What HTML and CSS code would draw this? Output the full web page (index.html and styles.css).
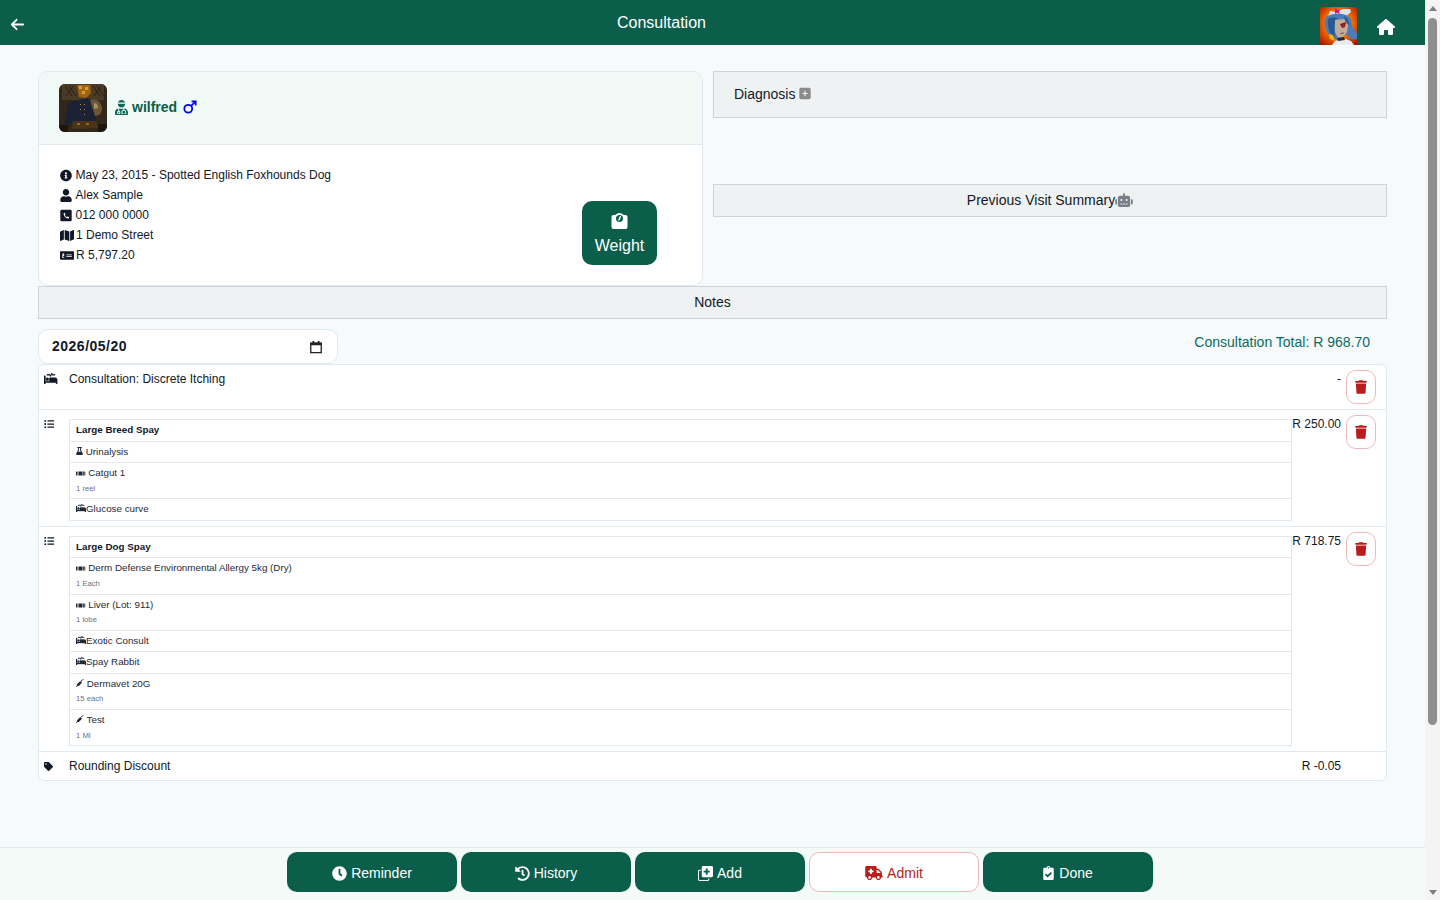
FILE: index.html
```html
<!DOCTYPE html>
<html lang="en">
<head>
<meta charset="utf-8">
<title>Consultation</title>
<link rel="stylesheet" href="styles.css">
</head>
<body>
<svg class="sprite" aria-hidden="true">
  <defs>
    <radialGradient id="fire" cx="50%" cy="45%" r="70%"><stop offset="0" stop-color="#ffb01a"/><stop offset=".55" stop-color="#f26a00"/><stop offset="1" stop-color="#a81500"/></radialGradient>
    <filter id="soft"><feGaussianBlur stdDeviation=".45"/></filter>
    <symbol id="i-arrow" viewBox="0 0 448 512"><path d="M9.4 233.4c-12.5 12.5-12.5 32.8 0 45.3l160 160c12.5 12.5 32.8 12.5 45.3 0s12.5-32.8 0-45.3L109.2 288H416c17.7 0 32-14.3 32-32s-14.3-32-32-32H109.3L214.600 118.600c12.500-12.500 12.500-32.800 0-45.300s-32.800-12.500-45.300 0l-160 160z"/></symbol>
    <symbol id="i-home" viewBox="0 0 576 512"><path d="M575.800 255.500c0 18-15 32.100-32 32.100h-32l.7 160.200c0 2.700-.2 5.400-.5 8.100V472c0 22.100-17.900 40-40 40H456c-1.100 0-2.200 0-3.300-.1-1.400.1-2.800.1-4.200.1H392c-22.100 0-40-17.900-40-40v-88c0-17.700-14.300-32-32-32h-64c-17.700 0-32 14.300-32 32v88c0 22.100-17.900 40-40 40h-55.900c-1.500 0-3-.1-4.500-.2-1.200.1-2.400.2-3.600.2H104c-22.100 0-40-17.900-40-40V360c0-.9 0-1.900.1-2.800v-69.600H32c-18 0-32-14-32-32.100 0-9 3-17 10-24L266.400 8c7-7 15-8 22-8s15 2 21 7l255.400 224.500c8 7 12 15 11 24z"/></symbol>
    <symbol id="i-info" viewBox="0 0 512 512"><path d="M256 8C119.043 8 8 119.083 8 256c0 136.997 111.043 248 248 248s248-111.003 248-248C504 119.083 392.957 8 256 8zm0 110c23.196 0 42 18.804 42 42s-18.804 42-42 42-42-18.804-42-42 18.804-42 42-42zm56 254c0 6.627-5.373 12-12 12h-88c-6.627 0-12-5.373-12-12v-24c0-6.627 5.373-12 12-12h12v-64h-12c-6.627 0-12-5.373-12-12v-24c0-6.627 5.373-12 12-12h64c6.627 0 12 5.373 12 12v100h12c6.627 0 12 5.373 12 12v24z"/></symbol>
    <symbol id="i-user" viewBox="0 0 448 512"><path d="M224 256c70.7 0 128-57.3 128-128S294.7 0 224 0 96 57.3 96 128s57.3 128 128 128zm89.6 32h-16.7c-22.2 10.2-46.9 16-72.9 16s-50.6-5.8-72.9-16h-16.7C60.2 288 0 348.2 0 422.4V464c0 26.5 21.5 48 48 48h352c26.5 0 48-21.5 48-48v-41.6c0-74.2-60.2-134.4-134.4-134.4z"/></symbol>
    <symbol id="i-phone" viewBox="0 0 448 512"><path fill-rule="evenodd" d="M48 32h352a48 48 0 0 1 48 48v352a48 48 0 0 1-48 48H48a48 48 0 0 1-48-48V80a48 48 0 0 1 48-48zM166 150l-32 24c-8 6-10 12-8 24 14 90 88 164 176 178 12 2 18 0 24-8l24-32c4-6 3-12-3-15l-56-26c-6-3-10-1-14 4l-20 25c-36-18-66-48-84-84l25-20c5-4 7-8 4-14l-26-56c-3-6-4-4-10 0z"/></symbol>
    <symbol id="i-map" viewBox="0 0 576 512"><path d="M0 117.66v346.32c0 11.32 11.43 19.06 21.94 14.86L160 416V32L20.12 87.95A32.006 32.006 0 0 0 0 117.66zM192 416l192 64V96L192 32v384zM554.06 33.16L416 96v384l139.88-55.95A31.996 31.996 0 0 0 576 394.34V48.02c0-11.32-11.43-19.06-21.94-14.86z"/></symbol>
    <symbol id="i-money" viewBox="0 0 640 512"><path fill-rule="evenodd" d="M32 64h576a32 32 0 0 1 32 32v320a32 32 0 0 1-32 32H32a32 32 0 0 1-32-32V96a32 32 0 0 1 32-32zM96 176v32h56v32h-56v112h32v24h32v-24h32v-32h-64v-32h64V176h-32v-24h-32v24zM288 208v40h256v-40zM288 288v40h256v-40z"/></symbol>
    <symbol id="i-plus" viewBox="0 0 448 512"><path d="M64 32C28.700 32 0 60.700 0 96v320c0 35.300 28.700 64 64 64h320c35.300 0 64-28.700 64-64V96c0-35.300-28.700-64-64-64H64zm136 312v-64h-64c-13.300 0-24-10.700-24-24s10.700-24 24-24h64v-64c0-13.300 10.700-24 24-24s24 10.700 24 24v64h64c13.300 0 24 10.700 24 24s-10.700 24-24 24h-64v64c0 13.300-10.700 24-24 24s-24-10.700-24-24z"/></symbol>
    <symbol id="i-robot" viewBox="0 0 640 512"><path d="M32 224H64V416H32A32 32 0 0 1 0 384V256A32 32 0 0 1 32 224Zm512-48V448a64 64 0 0 1-64 64H160a64 64 0 0 1-64-64V176a80 80 0 0 1 80-80H288V32a32 32 0 0 1 64 0V96H464A80 80 0 0 1 544 176ZM264 256a40 40 0 1 0-40 40A40 40 0 0 0 264 256Zm-8 128H192v32h64Zm96 0H288v32h64ZM456 256a40 40 0 1 0-40 40A40 40 0 0 0 456 256Zm-8 128H384v32h64ZM640 256V384a32 32 0 0 1-32 32H576V224h32A32 32 0 0 1 640 256Z"/></symbol>
    <symbol id="i-weight" viewBox="0 0 512 512"><path d="M64 64H448a64 64 0 0 1 64 64V448a64 64 0 0 1-64 64H64a64 64 0 0 1-64-64V128a64 64 0 0 1 64-64Z"/><circle cx="256" cy="168" r="168"/><circle cx="256" cy="176" r="112" fill="#0b5e4a"/><path d="M236 226L284 116" stroke="#fff" stroke-width="46" stroke-linecap="round"/></symbol>
    <symbol id="i-nurse" viewBox="0 0 448 512"><path d="M224 256c70.7 0 128-57.3 128-128S294.7 0 224 0 96 57.3 96 128s57.3 128 128 128zM104 424c0 13.3 10.7 24 24 24s24-10.7 24-24-10.7-24-24-24-24 10.7-24 24zm216-135.4v49c36.5 7.4 64 39.8 64 78.4v41.7c0 7.6-5.4 14.2-12.9 15.7l-32.2 6.4c-4.3.9-8.5-1.9-9.4-6.3l-3.1-15.7c-.9-4.3 1.9-8.6 6.3-9.4l19.3-3.9V416c0-62.8-96-65.1-96 1.9v26.7l19.3 3.9c4.3.9 7.1 5.1 6.3 9.4l-3.1 15.7c-.9 4.3-5.1 7.1-9.4 6.3l-31.2-4.2c-7.9-1.1-13.8-7.8-13.8-15.9V416c0-38.6 27.5-70.9 64-78.4v-45.2c-2.2.7-4.4 1.1-6.6 1.9-18 6.3-37.3 9.8-57.4 9.8s-39.4-3.500-57.4-9.8c-7.4-2.6-14.9-4.2-22.6-5.2v81.6c23.1 6.9 40 28.1 40 53.4 0 30.9-25.1 56-56 56s-56-25.1-56-56c0-25.3 16.9-46.5 40-53.4v-80.4C48.5 301 0 355.8 0 422.4v44.8C0 491.9 20.1 512 44.8 512h358.4c24.7 0 44.8-20.1 44.8-44.8v-44.8c0-72-56.8-130.3-128-133.8z"/><rect x="84" y="84" width="280" height="44" fill="#f0f9f6"/></symbol>
    <symbol id="i-mars" viewBox="0 0 16 16"><circle cx="6" cy="10" r="4.500" fill="none" stroke="currentColor" stroke-width="2"/><path d="M9.300 6.700L14 2M9.800 1.500h4.700v4.700" fill="none" stroke="currentColor" stroke-width="2"/></symbol>
    <symbol id="i-bed" viewBox="0 0 640 512"><path stroke="currentColor" stroke-width="24" d="M528 224H272c-8.800 0-16 7.200-16 16v144H64V144c0-8.800-7.200-16-16-16H16c-8.800 0-16 7.200-16 16v352c0 8.800 7.200 16 16 16h32c8.800 0 16-7.200 16-16v-48h512v48c0 8.800 7.200 16 16 16h32c8.800 0 16-7.200 16-16V336c0-61.900-50.100-112-112-112zM136 96h126.100l27.600 55.200c5.900 11.800 22.700 11.800 28.600 0L368 51.800 390.100 96H512c8.800 0 16-7.200 16-16s-7.200-16-16-16H409.900L382.300 8.800C376.400-3 359.600-3 353.700 8.800L304 108.200l-19.900-39.800c-1.400-2.700-4.100-4.400-7.200-4.400H136c-4.400 0-8 3.600-8 8v16c0 4.400 3.600 8 8 8zm24 256c35.300 0 64-28.700 64-64s-28.700-64-64-64-64 28.700-64 64 28.700 64 64 64z"/></symbol>
    <symbol id="i-list" viewBox="0 0 512 512"><path d="M48 48a48 48 0 1 0 48 48 48 48 0 0 0-48-48zm0 160a48 48 0 1 0 48 48 48 48 0 0 0-48-48zm0 160a48 48 0 1 0 48 48 48 48 0 0 0-48-48zm448 16H176a16 16 0 0 0-16 16v32a16 16 0 0 0 16 16h320a16 16 0 0 0 16-16v-32a16 16 0 0 0-16-16zm0-320H176a16 16 0 0 0-16 16v32a16 16 0 0 0 16 16h320a16 16 0 0 0 16-16V80a16 16 0 0 0-16-16zm0 160H176a16 16 0 0 0-16 16v32a16 16 0 0 0 16 16h320a16 16 0 0 0 16-16v-32a16 16 0 0 0-16-16z"/></symbol>
    <symbol id="i-tag" viewBox="0 0 512 512"><path d="M0 252.118V48C0 21.490 21.490 0 48 0h204.118a48 48 0 0 1 33.941 14.059l211.882 211.882c18.745 18.745 18.745 49.137 0 67.882L293.823 497.941c-18.745 18.745-49.137 18.745-67.882 0L14.059 286.059A48 48 0 0 1 0 252.118zM112 64c-26.510 0-48 21.490-48 48s21.490 48 48 48 48-21.490 48-48-21.490-48-48-48z"/></symbol>
    <symbol id="i-trash" viewBox="0 0 448 512"><path d="M135.200 17.700L128 32H32C14.300 32 0 46.300 0 64s14.300 32 32 32h384c17.700 0 32-14.300 32-32s-14.300-32-32-32h-96l-7.200-14.300C307.400 6.800 296.300 0 284.200 0H163.800c-12.100 0-23.200 6.800-28.600 17.700zM416 128H32l21.200 339c1.600 25.300 22.600 45 47.900 45h245.800c25.300 0 46.300-19.700 47.900-45L416 128z"/></symbol>
    <symbol id="i-flask" viewBox="0 0 448 512"><path d="M96 0h256a16 16 0 0 1 16 16v32a16 16 0 0 1-16 16h-24v136l112 232c14 30-8 80-48 80H56c-40 0-62-50-48-80L120 200V64H96a16 16 0 0 1-16-16V16A16 16 0 0 1 96 0zm88 64v152l-40 84h160l-40-84V64z"/></symbol>
    <symbol id="i-pills" viewBox="0 128 640 256"><path d="M40 128h40v256H40A40 40 0 0 1 0 344V168a40 40 0 0 1 40-40zm72 0h56v256h-56zm88 0h240v256H200zm272 0h56v256h-56zm88 0h40a40 40 0 0 1 40 40v176a40 40 0 0 1-40 40h-40z"/></symbol>
    <symbol id="i-syringe" viewBox="0 0 512 512"><path d="M496 16c-20-20-52-20-72 0l-60 60-12-12-44 44 48 48 44-44-12-12 60-60c20-20 28-4 48-24zM272 124L84 312c-14 14-22 32-22 52v46L8 464c-10 10-10 26 0 36s26 10 36 0l54-54h46c20 0 38-8 52-22l188-188z"/></symbol>
    <symbol id="i-calendar" viewBox="0 0 16 16"><path d="M2 3.500h12v11H2z" fill="none" stroke="currentColor" stroke-width="1.500"/><path d="M4 1h2v3H4zM10 1h2v3h-2z"/><path d="M2 3h12v3H2z"/></symbol>
    <symbol id="i-clock" viewBox="0 0 512 512"><path d="M256 8C119 8 8 119 8 256s111 248 248 248 248-111 248-248S393 8 256 8zm92.490 313l-20 25a16 16 0 0 1-22.490 2.500l-67-49.720a40 40 0 0 1-15-31.230V112a16 16 0 0 1 16-16h32a16 16 0 0 1 16 16v144l58 42.500a16 16 0 0 1 2.490 22.500z"/></symbol>
    <symbol id="i-history" viewBox="0 0 512 512"><path d="M504 255.531c.253 136.640-111.180 248.372-247.820 248.468-59.015.042-113.223-20.530-155.822-54.911-11.077-8.940-11.905-25.541-1.839-35.607l11.267-11.267c8.609-8.609 22.353-9.551 31.891-1.984C173.062 425.135 212.781 440 256 440c101.705 0 184-82.311 184-184 0-101.705-82.311-184-184-184-48.814 0-93.149 18.969-126.068 49.932l50.754 50.754c10.080 10.080 2.941 27.314-11.313 27.314H24c-8.837 0-16-7.163-16-16V38.627c0-14.254 17.234-21.393 27.314-11.314l49.372 49.372C129.209 34.136 189.552 8 256 8c136.810 0 247.747 110.780 248 247.531zm-180.912 78.784l9.823-12.630c8.138-10.463 6.253-25.542-4.210-33.679L288 256.349V152c0-13.255-10.745-24-24-24h-16c-13.255 0-24 10.745-24 24v135.651l65.409 50.874c10.463 8.137 25.541 6.253 33.679-4.210z"/></symbol>
    <symbol id="i-copy" viewBox="0 0 512 512"><path fill-rule="evenodd" d="M176 0h288a48 48 0 0 1 48 48v288a48 48 0 0 1-48 48H176a48 48 0 0 1-48-48V48a48 48 0 0 1 48-48zm88 88v72h-72v64h72v72h64v-72h72v-64h-72V88z"/><path d="M48 128h48v32H48a16 16 0 0 0-16 16v288a16 16 0 0 0 16 16h288a16 16 0 0 0 16-16v-48h32v48a48 48 0 0 1-48 48H48a48 48 0 0 1-48-48V176a48 48 0 0 1 48-48z"/></symbol>
    <symbol id="i-ambulance" viewBox="0 0 640 512"><path d="M624 352h-16V243.900c0-12.700-5.100-24.900-14.100-33.900L494 110.100c-9-9-21.200-14.100-33.900-14.100H416V48c0-26.500-21.500-48-48-48H48C21.500 0 0 21.500 0 48v320c0 26.500 21.500 48 48 48h16c0 53 43 96 96 96s96-43 96-96h128c0 53 43 96 96 96s96-43 96-96h48c8.800 0 16-7.200 16-16v-32c0-8.800-7.200-16-16-16zM160 464c-26.500 0-48-21.500-48-48s21.500-48 48-48 48 21.500 48 48-21.500 48-48 48zm144-248c0 4.400-3.600 8-8 8h-56v56c0 4.400-3.600 8-8 8h-48c-4.400 0-8-3.600-8-8v-56h-56c-4.400 0-8-3.600-8-8v-48c0-4.400 3.600-8 8-8h56v-56c0-4.400 3.600-8 8-8h48c4.400 0 8 3.600 8 8v56h56c4.400 0 8 3.600 8 8v48zm176 248c-26.500 0-48-21.500-48-48s21.500-48 48-48 48 21.500 48 48-21.500 48-48 48zm80-208H416V144h44.100l99.900 99.900V256z"/></symbol>
    <symbol id="i-clipboard" viewBox="0 0 384 512"><path d="M336 64h-80c0-35.300-28.700-64-64-64s-64 28.700-64 64H48C21.500 64 0 85.500 0 112v352c0 26.500 21.500 48 48 48h288c26.500 0 48-21.500 48-48V112c0-26.500-21.500-48-48-48zM192 40c13.300 0 24 10.700 24 24s-10.700 24-24 24-24-10.700-24-24 10.700-24 24-24zm121.200 231.800l-143 141.800c-4.700 4.700-12.300 4.600-17-.1l-82.600-83.300c-4.700-4.700-4.600-12.300.1-17L99.100 285c4.700-4.700 12.300-4.600 17 .1l46 46.400 106-105.200c4.700-4.700 12.300-4.600 17 .1l28.200 28.400c4.700 4.800 4.600 12.300-.1 17z"/></symbol>
  </defs>
</svg>

<div class="app">
  <header class="topbar">
    <svg class="ic-back"><use href="#i-arrow"/></svg>
    <h1 class="title">Consultation</h1>
    <div class="top-right">
      <svg class="top-avatar" viewBox="0 0 37 38" role="img" aria-label="User avatar">
        <rect width="37" height="38" fill="url(#fire)"/>
        <path d="M8 9l2-5 6 1 7-3 7 0 1 3-5 4-10 2z" fill="#dfe4ea"/>
        <path d="M15 1l3 2 2-1-1 3 1 2-3-1-2 1 0-3z" fill="#d5178f"/>
        <path d="M6 10c5-4 15-4 20-2 5 2 6 7 6 11 2 3 3 5 5 7v6c-3 1-6 0-8-2l-3-3-9 6-6-3C5 25 3 15 6 10z" fill="#4a7db8"/>
        <path d="M8 12c3-2 6-2 9-1l-3 9 1 10-4-2c-2-5-4-11-3-16zM24 9c3 1 5 5 5 9l-3-2z" fill="#2c5790"/>
        <path d="M15 13l9-1 4 6-1 7-4 5-5 1-3-6z" fill="#c2ab98"/>
        <path d="M20 17l6-2-1 5-3 1z" fill="#6d2325"/>
        <path d="M22.500 17.500h2v2h-2z" fill="#e5141f"/>
        <path d="M19 27l5-2-1 2z" fill="#7a5a54"/>
        <path d="M9 27l4 1 2 6-5-2z" fill="#f1b21c"/>
        <path d="M15 34l8-3 8 3 3 4H12z" fill="#e8ecef"/>
        <path d="M17 31l7-1 1 3-7 1z" fill="#2c2730"/>
      </svg>
      <svg class="ic-home"><use href="#i-home"/></svg>
    </div>
  </header>

  <main class="content">
    <section class="top-grid">
      <article class="patient-card">
        <div class="patient-head">
          <svg class="pet-photo" viewBox="0 0 48 48" role="img" aria-label="Pet photo">
            <rect width="48" height="48" fill="#33261a"/>
            <g filter="url(#soft)">
              <path d="M3 0h42v16H3z" fill="#4a3a26"/>
              <path d="M6 2l7 10M10 2l7 10M14 2l-7 10M34 2l7 10M38 2l7 10M42 2l-7 10" stroke="#2a2014" stroke-width="1"/>
              <path d="M18 1h13l1 8-5 5-7-1z" fill="#9d6618"/>
              <path d="M20 2h3v3h-3zM26 3h3v3h-3zM23 7h3v3h-3z" fill="#dc9c2c"/>
              <path d="M10 18l19-4 7 4 1 21H14l-9 3 3-17z" fill="#1c2436"/>
              <path d="M31 16c6-2 11 1 12 8 0 5-3 8-7 8z" fill="#6c5535"/>
              <path d="M35 19c3 0 4 3 4 5l-4 1z" fill="#a78e63"/>
              <path d="M14 37h23l2 7-26 1z" fill="#4b3518"/>
              <path d="M18 39h3v2h-3zM27 39h3v2h-3z" fill="#8f6a2a"/>
              <path d="M0 41h10l-2 7H0zM39 40h9v8h-9z" fill="#1f160b"/>
            </g>
            <path d="M25 20h1v1h-1zM25 25h1v1h-1zM25 30h1v1h-1zM21 20h1v1h-1zM21 25h1v1h-1z" fill="#b58a3a"/>
          </svg>
          <svg class="ic-nurse"><use href="#i-nurse"/></svg>
          <span class="pet-name">wilfred</span>
          <svg class="ic-mars"><use href="#i-mars"/></svg>
        </div>
        <div class="patient-body">
          <ul class="info-list">
            <li><svg class="ic-info"><use href="#i-info"/></svg><span class="gap3">May 23, 2015 - Spotted English Foxhounds Dog</span></li>
            <li><svg class="ic-info"><use href="#i-user"/></svg><span class="gap3">Alex Sample</span></li>
            <li><svg class="ic-info"><use href="#i-phone"/></svg><span class="gap3">012 000 0000</span></li>
            <li><svg class="ic-map"><use href="#i-map"/></svg><span>1 Demo Street</span></li>
            <li><svg class="ic-map"><use href="#i-money"/></svg><span>R 5,797.20</span></li>
          </ul>
          <button class="weight-btn" type="button">
            <svg class="ic-weight"><use href="#i-weight"/></svg>
            <span>Weight</span>
          </button>
        </div>
      </article>
      <div class="side-col">
        <div class="bar diagnosis">Diagnosis <svg class="ic-plus"><use href="#i-plus"/></svg></div>
        <div class="bar summary">Previous Visit Summary<svg class="ic-robot"><use href="#i-robot"/></svg></div>
      </div>
    </section>

    <div class="bar notes">Notes</div>

    <div class="date-row">
      <div class="date-box"><span>2026/05/20</span><svg class="ic-cal"><use href="#i-calendar"/></svg></div>
      <div class="total">Consultation Total: R 968.70</div>
    </div>

    <section class="lines">
      <div class="line">
        <svg class="ic-row-bed"><use href="#i-bed"/></svg>
        <div class="line-main">Consultation: Discrete Itching</div>
        <div class="price">-</div>
        <button class="del" type="button" aria-label="Delete"><svg class="ic-trash"><use href="#i-trash"/></svg></button>
      </div>

      <div class="line">
        <svg class="ic-row-list"><use href="#i-list"/></svg>
        <div class="line-main">
          <ul class="bundle">
            <li class="bundle-title">Large Breed Spay</li>
            <li><svg class="ic-flask"><use href="#i-flask"/></svg> Urinalysis</li>
            <li><svg class="ic-pills"><use href="#i-pills"/></svg> Catgut 1<small>1 reel</small></li>
            <li><svg class="ic-bed"><use href="#i-bed"/></svg>Glucose curve</li>
          </ul>
        </div>
        <div class="price">R 250.00</div>
        <button class="del" type="button" aria-label="Delete"><svg class="ic-trash"><use href="#i-trash"/></svg></button>
      </div>

      <div class="line">
        <svg class="ic-row-list"><use href="#i-list"/></svg>
        <div class="line-main">
          <ul class="bundle">
            <li class="bundle-title">Large Dog Spay</li>
            <li><svg class="ic-pills"><use href="#i-pills"/></svg> Derm Defense Environmental Allergy 5kg (Dry)<small>1 Each</small></li>
            <li><svg class="ic-pills"><use href="#i-pills"/></svg> Liver (Lot: 911)<small>1 lobe</small></li>
            <li><svg class="ic-bed"><use href="#i-bed"/></svg>Exotic Consult</li>
            <li><svg class="ic-bed"><use href="#i-bed"/></svg>Spay Rabbit</li>
            <li><svg class="ic-syringe"><use href="#i-syringe"/></svg> Dermavet 20G<small>15 each</small></li>
            <li><svg class="ic-syringe"><use href="#i-syringe"/></svg> Test<small>1 Ml</small></li>
          </ul>
        </div>
        <div class="price">R 718.75</div>
        <button class="del" type="button" aria-label="Delete"><svg class="ic-trash"><use href="#i-trash"/></svg></button>
      </div>

      <div class="line">
        <svg class="ic-row-tag"><use href="#i-tag"/></svg>
        <div class="line-main">Rounding Discount</div>
        <div class="price">R -0.05</div>
        <div class="del-spacer"></div>
      </div>
    </section>
  </main>

  <footer class="actions">
    <button class="act" type="button"><svg class="ic-act"><use href="#i-clock"/></svg>Reminder</button>
    <button class="act" type="button"><svg class="ic-act"><use href="#i-history"/></svg>History</button>
    <button class="act" type="button"><svg class="ic-act"><use href="#i-copy"/></svg>Add</button>
    <button class="act act-danger" type="button"><svg class="ic-amb"><use href="#i-ambulance"/></svg>Admit</button>
    <button class="act" type="button"><svg class="ic-clip"><use href="#i-clipboard"/></svg>Done</button>
  </footer>
</div>

<div class="scrollbar" aria-hidden="true">
  <span class="sb-up"></span>
  <span class="sb-thumb"></span>
  <span class="sb-down"></span>
</div>
</body>
</html>
```
FILE: styles.css
```css
* { box-sizing: border-box; }
html, body { margin: 0; height: 100%; }
body {
  overflow: hidden;
  background: #f6fafb;
  color: #111827;
  font-family: "Liberation Sans", Arial, sans-serif;
  font-size: 12px;
}
svg { fill: currentColor; display: inline-block; flex: none; }
.sprite { position: absolute; width: 0; height: 0; }
ul { list-style: none; margin: 0; padding: 0; }
button { font-family: inherit; border: 0; cursor: pointer; padding: 0; }

.app { display: flex; flex-direction: column; height: 900px; }

.topbar {
  display: flex;
  align-items: flex-end;
  height: 45px;
  flex: none;
  padding: 0 45px 0 10px;
  background: #0b5e4a;
  color: #fff;
}
.ic-back { width: 15px; height: 15px; margin-bottom: 13px; }
.title {
  flex: 1;
  margin: 0 0 13px;
  font-size: 16px;
  font-weight: 400;
  line-height: 18px;
  text-align: center;
}
.top-right { display: flex; align-items: flex-end; padding-left: 22px; }
.top-avatar { width: 37px; height: 38px; display: block; }
.ic-home { width: 18px; height: 16px; margin: 0 0 10px 20px; }

.content {
  flex: 1;
  min-height: 0;
  padding: 26px 53px 0 38px;
}
.top-grid { display: grid; grid-template-columns: 665px 1fr; column-gap: 10px; }

.patient-card {
  height: 215px;
  background: #fff;
  border: 1px solid #e2e8f0;
  border-radius: 10px;
  overflow: hidden;
}
.patient-head {
  display: flex;
  align-items: center;
  height: 73px;
  padding: 0 20px;
  background: #f0f9f6;
  border-bottom: 1px solid #e2e8f0;
}
.pet-photo { width: 48px; height: 48px; border-radius: 6px; margin-right: 8px; }
.ic-nurse { width: 13px; height: 15px; color: #0b6a5a; margin: 0 4px 1px 0; }
.pet-name { margin-bottom: 2px; font-size: 14px; font-weight: 700; color: #0b5e4a; }
.ic-mars { width: 14px; height: 14px; margin: 0 0 2px 6px; color: #0000ff; }

.patient-body {
  display: flex;
  justify-content: space-between;
  align-items: flex-end;
  padding: 20px 45px 19px 21px;
}
.info-list li { display: flex; align-items: center; height: 20px; line-height: 20px; }
.ic-info { width: 12px; height: 13px; }
.ic-map { width: 14px; height: 13px; margin-right: 2px; }
.gap3 { margin-left: 3.5px; }
.weight-btn {
  display: flex;
  flex-direction: column;
  align-items: center;
  width: 75px;
  height: 64px;
  padding-top: 12px;
  border-radius: 10px;
  background: #0b5e4a;
  color: #fff;
  font-size: 16px;
  line-height: 18px;
}
.ic-weight { width: 17px; height: 16px; margin-bottom: 8px; }

.side-col { display: flex; flex-direction: column; }
.bar {
  background: #eff2f3;
  border: 1px solid #ced4da;
  font-size: 14px;
  color: #111827;
}
.diagnosis { display: flex; align-items: center; height: 47px; padding: 0 0 2px 20px; white-space: pre; }
.ic-plus { width: 12px; height: 13px; color: #8a8a8a; }
.summary {
  display: flex;
  align-items: center;
  justify-content: center;
  height: 33px;
  margin-top: 66px;
  padding-bottom: 2px;
}
.ic-robot { width: 18px; height: 14px; color: #7a7f87; }
.notes { height: 33px; line-height: 31px; text-align: center; }

.date-row {
  display: flex;
  justify-content: space-between;
  align-items: flex-start;
  margin-top: 10px;
  padding-right: 17px;
}
.date-box {
  display: flex;
  align-items: center;
  justify-content: space-between;
  width: 300px;
  height: 35px;
  padding: 0 14px 2px 13px;
  background: #fff;
  border: 1px solid #e2e8f0;
  border-radius: 10px;
  font-size: 14px;
  font-weight: 700;
  letter-spacing: .5px;
}
.ic-cal { width: 14px; height: 14px; margin-top: 2px; color: #222; }
.total { margin-top: 5px; font-size: 14px; line-height: 16px; color: #0c6b5f; }

.lines {
  background: #fff;
  border: 1px solid #e2e8f0;
  border-radius: 6px;
}
.line {
  display: flex;
  align-items: flex-start;
  padding: 5px 10px 5px 5px;
  line-height: 18px;
  border-top: 1px solid #e2e8f0;
}
.line:first-child { border-top: 0; }
.line-main { flex: 1; min-width: 0; padding-left: 11.5px; }
.ic-row-bed { width: 13.5px; height: 11px; margin-top: 3px; }
.ic-row-list { width: 10.5px; height: 10px; margin: 4px 3px 0 0; }
.ic-row-tag { width: 9px; height: 9px; margin: 5px 4.5px 0 0; }
.price { padding-right: 5px; white-space: nowrap; }
.del {
  display: flex;
  align-items: center;
  justify-content: center;
  width: 30px;
  height: 34px;
  background: #fff;
  border: 1px solid #efb8b8;
  border-radius: 10px;
}
.del-spacer { width: 30px; }
.ic-trash { width: 12px; height: 14px; color: #b91c1c; }

.bundle {
  margin-top: 4px;
  border: 1px solid #e2e8f0;
  border-bottom: 0;
  font-size: 9.8px;
  line-height: 14.55px;
}
.bundle li {
  padding: 3px 6px;
  border-bottom: 1px solid #e2e8f0;
  color: #1f2937;
}
.bundle .bundle-title { font-weight: 700; color: #111827; }
.bundle small { display: block; padding-top: 1px; font-size: 7.68px; line-height: 13.65px; color: #6b7280; }
.ic-flask { width: 7px; height: 8px; }
.ic-pills { width: 9.5px; height: 5px; }
.ic-bed { width: 10px; height: 8px; }
.ic-syringe { width: 8px; height: 8px; }

.actions {
  display: flex;
  justify-content: center;
  gap: 4px;
  height: 53px;
  flex: none;
  padding-top: 4px;
  background: #f3faf8;
  border-top: 1px solid #dde9e5;
}
.act {
  display: flex;
  align-items: center;
  justify-content: center;
  width: 170px;
  height: 40px;
  padding-top: 2px;
  background: #0b5e4a;
  color: #fff;
  font-size: 14px;
  border-radius: 10px;
}
.act-danger { background: #fff; color: #b91c1c; border: 1px solid #efb8b8; }
.ic-act { width: 15px; height: 15px; margin-right: 4px; }
.ic-amb { width: 18px; height: 14px; margin-right: 4px; }
.ic-clip { width: 11px; height: 14px; margin-right: 5px; }

.scrollbar {
  position: fixed;
  top: 0;
  right: 0;
  bottom: 0;
  width: 15px;
  background: #f4f4f4;
  display: flex;
  flex-direction: column;
  align-items: center;
}
.sb-up, .sb-down { width: 0; height: 0; border-left: 4px solid transparent; border-right: 4px solid transparent; }
.sb-up { margin-top: 6px; border-bottom: 5px solid #7f7f7f; }
.sb-thumb { width: 9px; height: 707px; margin-top: 7px; background: #8f8f8f; border-radius: 5px; }
.sb-down { margin-top: auto; margin-bottom: 5px; border-top: 5px solid #7f7f7f; }
```
